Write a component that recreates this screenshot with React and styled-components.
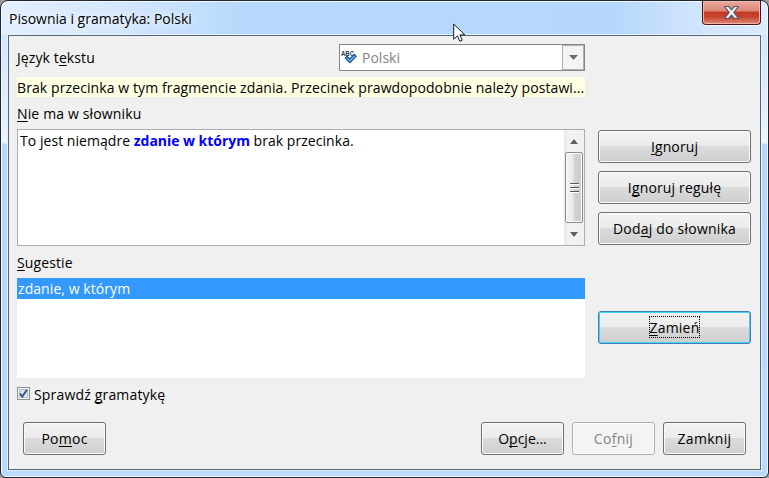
import React from "react";
import styled, { createGlobalStyle, css } from "styled-components";

const GlobalStyle = createGlobalStyle`
  * { box-sizing: border-box; }
  body { margin: 0; background: #9a9a9a; overflow: hidden; }
`;

const Window = styled.main`
  position: relative;
  width: 769px;
  height: 478px;
  display: flex;
  flex-direction: column;
  padding: 0 6px 7px;
  border: 1px solid #23262e;
  border-radius: 8px 8px 6px 6px;
  box-shadow: inset 0 0 0 1px #f3faff;
  font: 14px/20px "Open Sans", "Noto Sans", sans-serif;
  color: #000;
  background:
    linear-gradient(90deg, #e2effe 0, #d5e8fe 110px, #b7d9fd 245px, #b5d7fc 610px, #cfe4fd 690px, #dcebfe 769px) 0 0 / 100% 34px no-repeat,
    linear-gradient(180deg, #d2e6fd 0, #e4f0fd 88px, #edf6ff 108px, #b7d8fc 109px, #b9dafc 100%) 0 34px / 100% 443px no-repeat;
`;

const TitleBar = styled.header`
  flex: 0 0 33px;
  display: flex;
  justify-content: space-between;
  padding: 0 1px 0 2px;
`;

const Title = styled.h1`
  margin: 0;
  padding-top: 8px;
  font: inherit;
  text-shadow: 0 0 8px #fff, 0 0 12px #fff;
`;

const CloseButton = styled.button`
  width: 59px;
  height: 24px;
  padding: 0;
  display: flex;
  align-items: center;
  justify-content: center;
  border: 1px solid #4c1514;
  border-top: 0;
  border-radius: 0 0 4px 4px;
  box-shadow: inset 0 0 0 1px #f0b4a9, 0 1px 0 #f4f9ff;
  background: linear-gradient(#eaa99d 0, #dc8778 10px, #c63925 11px, #c74430 16px, #e18a77 23px);
`;

const Client = styled.section`
  flex: 1;
  display: flex;
  flex-direction: column;
  border: 1px solid #566779;
  outline: 1px solid #e6f3ff;
  margin: 1px 1px 0;
  background: #f0f0f0;
`;

const Body = styled.div`
  display: grid;
  grid-template-columns: 568px 153px;
  column-gap: 13px;
  padding: 8px 0 0 8px;
  height: 372px;
`;

const Column = styled.div`
  display: flex;
  flex-direction: column;
`;

const Text = styled.span`
  white-space: pre;
  letter-spacing: ${(p) => p.$ls || 0}px;
`;

const Key = styled.u`
  text-decoration: underline 1px;
  text-underline-offset: 2px;
  text-decoration-skip-ink: none;
`;

const LanguageRow = styled.div`
  display: flex;
  justify-content: space-between;
  height: 27px;
  & > span { padding-top: 4px; }
`;

const Combo = styled.div`
  display: flex;
  width: 246px;
  height: 27px;
  border: 1px solid #82868f;
  background: #fff;
  color: #838383;
  & > svg { margin: 5px 0 0 1px; }
  & > span { flex: 1; padding: 3px 0 0 5px; }
`;

const ComboArrow = styled.div`
  width: 22px;
  display: grid;
  place-items: center;
  border: 1px solid #adb2b5;
  background: #f4f4f4;
`;

const Notice = styled.div`
  height: 20px;
  margin-top: 6px;
  line-height: 22px;
  background: #ffffe1;
  overflow: hidden;
`;

const Label = styled.div`
  height: 20px;
  margin-top: 7px;
`;

const Editor = styled.div`
  display: flex;
  justify-content: space-between;
  height: 117px;
  margin-top: 5px;
  border: 1px solid #abadb3;
  background: #fff;
  & > p { margin: 1px 0 0 2px; }
  b { color: #0000ff; font-weight: 700; letter-spacing: -0.04px; }
`;

const Scrollbar = styled.div`
  width: 20px;
  display: flex;
  flex-direction: column;
  align-items: center;
  background: linear-gradient(90deg, #e9e9e9, #f3f3f3 30%, #f0f0f0);
`;

const ScrollArrow = styled.div`
  height: 22px;
  display: grid;
  place-items: center;
`;

const Thumb = styled.div`
  width: 18px;
  height: 71px;
  display: grid;
  place-items: center;
  border: 1px solid #8c8c8f;
  border-radius: 2px;
  box-shadow: inset 0 0 0 1px #fafafa;
  background: linear-gradient(90deg, #f4f4f4 0, #e8e8ea 45%, #d2d3d6 50%, #cbccd0 85%, #dedee1 100%);
`;

const Suggestions = styled.div`
  height: 100px;
  margin-top: 5px;
  background: #fff;
`;

const Suggestion = styled.div`
  height: 21px;
  padding-left: 1px;
  line-height: 22px;
  background: #3399ff;
  color: #fff;
`;

const CheckRow = styled.label`
  display: flex;
  align-items: center;
  gap: 4px;
  height: 20px;
  margin-top: 7px;
`;

const CheckBox = styled.span`
  width: 13px;
  height: 13px;
  margin-top: -3px;
  display: grid;
  place-items: center;
  border: 1px solid #8e8f8f;
  box-shadow: inset 0 0 0 1px #f4f4f4, inset 0 0 0 2px #b8bec8;
  background: linear-gradient(135deg, #cfd5dd, #f6f6f6);
`;

const Actions = styled.div`
  display: flex;
  flex-direction: column;
  gap: 8px;
  padding-top: 86px;
`;

const Button = styled.button`
  height: 33px;
  width: ${(p) => (p.$wide ? 153 : 83)}px;
  margin-top: ${(p) => p.$top || 0}px;
  padding: 1px 0 0;
  font: inherit;
  color: #000;
  border: 1px solid #707070;
  border-radius: 3px;
  box-shadow: inset 0 0 0 1px #fbfbfb;
  background: linear-gradient(#f3f3f3 0, #ebebeb 48%, #dcdcdc 50%, #cecece 100%);
  ${(p) => p.$primary && css`
    padding: 0 0 1px;
    border-color: #3c7fb1;
    box-shadow: inset 0 0 0 1px #45d2f7;
  `}
  ${(p) => p.disabled && css`
    border-color: #adb2b5;
    color: #838383;
    background: #f4f4f4;
  `}
`;

const Focus = styled.span`
  display: inline-block;
  height: 22px;
  padding: 0;
  line-height: 21px;
  border: 1px dotted #000;
`;

const Footer = styled.footer`
  display: flex;
  gap: 8px;
  padding: 14px 14px 0;
  & > :first-child { margin-right: auto; }
`;

const Cursor = styled.svg`
  position: absolute;
  left: 452px;
  top: 22px;
`;

const SpellIcon = () => (
  <svg width="16" height="16" viewBox="0 0 16 16">
    <text x="0" y="5.6" fontFamily="Liberation Sans, sans-serif" fontSize="6.6" fontWeight="700" textLength="13" lengthAdjust="spacingAndGlyphs" fill="#1c3c50">ABC</text>
    <path d="m4.3 8 1.9-1.7L8.6 9l4.8-4.5 1.7 1.8-6.1 6.4z" fill="#65b8f4" stroke="#154f86" strokeWidth="1.2" />
  </svg>
);

const Arrow = ({ up, color = "#505050" }) => (
  <svg width="9" height="5" viewBox="0 0 9 5">
    <path d={up ? "M0 5 4.5 0 9 5z" : "M0 0h9L4.5 5z"} fill={color} />
  </svg>
);

const ScrollGlyph = ({ up }) => (
  <svg width="8" height="5" viewBox="0 0 8 5">
    <path d={up ? "M0 5 4 0 8 5z" : "M0 0h8L4 5z"} fill="#606060" />
  </svg>
);

export default function App() {
  return (
    <>
      <GlobalStyle />
      <Window>
        <TitleBar>
          <Title><Text>Pisownia i gramatyka: Polski</Text></Title>
          <CloseButton aria-label="Zamknij okno">
            <svg width="17" height="15" viewBox="0 0 17 15">
              <path d="M1.5 1.5h4.2l2.8 3.3 2.8-3.3h4.2L10.8 7.4l4.7 6.1h-4.2l-2.8-3.4-2.8 3.4H1.5l4.7-6.1z" fill="#f3f3f3" stroke="#535666" strokeWidth="1.2" strokeLinejoin="round" />
            </svg>
          </CloseButton>
        </TitleBar>
        <Client>
          <Body>
            <Column>
              <LanguageRow>
                <Text $ls={0.1}>Język t<Key>e</Key>kstu</Text>
                <Combo>
                  <SpellIcon />
                  <Text>Polski</Text>
                  <ComboArrow><Arrow color="#6d6d6d" /></ComboArrow>
                </Combo>
              </LanguageRow>
              <Notice><Text $ls={0.1}>Brak przecinka w tym fragmencie zdania. Przecinek prawdopodobnie należy postawi...</Text></Notice>
              <Label><Text $ls={0.14}><Key>N</Key>ie ma w słowniku</Text></Label>
              <Editor>
                <p><Text $ls={0.05}>To jest niemądre <b>zdanie w którym</b> brak przecinka.</Text></p>
                <Scrollbar>
                  <ScrollArrow><ScrollGlyph up /></ScrollArrow>
                  <Thumb>
                    <svg width="9" height="11" viewBox="0 0 9 11">
                      <path d="M0 1.5h9M0 5.5h9M0 9.5h9" stroke="#55575b" />
                      <path d="M0 2.5h9M0 6.5h9M0 10.5h9" stroke="#fff" />
                    </svg>
                  </Thumb>
                  <ScrollArrow><ScrollGlyph /></ScrollArrow>
                </Scrollbar>
              </Editor>
              <Label><Text $ls={0.1}><Key>S</Key>ugestie</Text></Label>
              <Suggestions><Suggestion><Text $ls={0.07}>zdanie, w którym</Text></Suggestion></Suggestions>
              <CheckRow>
                <CheckBox>
                  <svg width="9" height="9" viewBox="0 0 9 9"><path d="m1 4.5 2.3 3L8 .8" fill="none" stroke="#3b5394" strokeWidth="2" /></svg>
                </CheckBox>
                <Text $ls={0.17}>Sprawdź <Key>g</Key>ramatykę</Text>
              </CheckRow>
            </Column>
            <Actions>
              <Button $wide><Text $ls={0.1}><Key>I</Key>gnoruj</Text></Button>
              <Button $wide><Text $ls={0.15}>I<Key>g</Key>noruj regułę</Text></Button>
              <Button $wide><Text $ls={0.22}>Dod<Key>a</Key>j do słownika</Text></Button>
              <Button $wide $primary $top={58}><Focus><Text $ls={0.2}><Key>Z</Key>amień</Text></Focus></Button>
            </Actions>
          </Body>
          <Footer>
            <Button><Text $ls={0.25}>Po<Key>m</Key>oc</Text></Button>
            <Button><Text>O<Key>p</Key>cje...</Text></Button>
            <Button disabled><Text $ls={0.3}>Co<Key>f</Key>nij</Text></Button>
            <Button><Text $ls={0.3}>Zamknij</Text></Button>
          </Footer>
        </Client>
        <Cursor width="13" height="20" viewBox="0 0 13 20">
          <path d="M.7 1v15.3l3.7-3.4 2.4 5.4 2.5-1.1-2.4-5.3h4.9z" fill="#fff" stroke="#151a30" />
        </Cursor>
      </Window>
    </>
  );
}
